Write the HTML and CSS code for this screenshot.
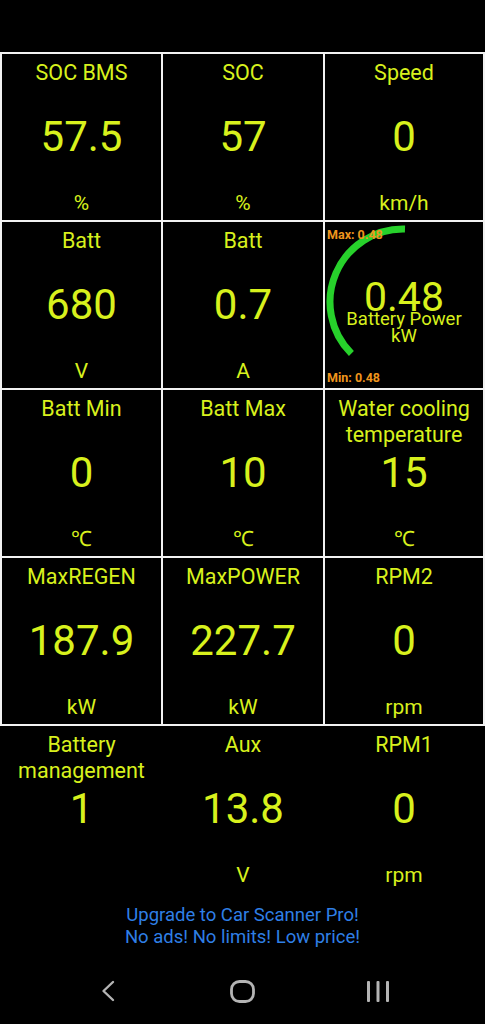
FILE: index.html
```html
<!DOCTYPE html>
<html>
<head>
<meta charset="utf-8">
<link rel="stylesheet" href="styles.css">
</head>
<body>
<div class="screen">
  <div class="status"></div>
  <div class="grid boxed">
    <div class="cell"><div class="title">SOC BMS</div><div class="value">57.5</div><div class="unit">%</div></div>
    <div class="cell"><div class="title">SOC</div><div class="value">57</div><div class="unit">%</div></div>
    <div class="cell"><div class="title">Speed</div><div class="value">0</div><div class="unit">km/h</div></div>

    <div class="cell"><div class="title">Batt</div><div class="value">680</div><div class="unit">V</div></div>
    <div class="cell"><div class="title">Batt</div><div class="value">0.7</div><div class="unit">A</div></div>
    <div class="cell gauge">
      <svg class="arc" width="158" height="166" viewBox="0 0 158 166">
        <path d="M 26.4 131.6 A 73 73 0 0 1 80 7" fill="none" stroke="#27d12b" stroke-width="7"/>
      </svg>
      <div class="gmax">Max: 0.48</div>
      <div class="gvalue">0.48</div>
      <div class="glabel">Battery Power<br>kW</div>
      <div class="gmin">Min: 0.48</div>
    </div>

    <div class="cell"><div class="title">Batt Min</div><div class="value">0</div><div class="unit">℃</div></div>
    <div class="cell"><div class="title">Batt Max</div><div class="value">10</div><div class="unit">℃</div></div>
    <div class="cell"><div class="title">Water cooling temperature</div><div class="value">15</div><div class="unit">℃</div></div>

    <div class="cell"><div class="title">MaxREGEN</div><div class="value">187.9</div><div class="unit">kW</div></div>
    <div class="cell"><div class="title">MaxPOWER</div><div class="value">227.7</div><div class="unit">kW</div></div>
    <div class="cell"><div class="title">RPM2</div><div class="value">0</div><div class="unit">rpm</div></div>
  </div>
  <div class="grid plain">
    <div class="cell"><div class="title">Battery management</div><div class="value">1</div><div class="unit"></div></div>
    <div class="cell"><div class="title">Aux</div><div class="value">13.8</div><div class="unit">V</div></div>
    <div class="cell"><div class="title">RPM1</div><div class="value">0</div><div class="unit">rpm</div></div>
  </div>
  <div class="ad">Upgrade to Car Scanner Pro!<br>No ads! No limits! Low price!</div>
  <div class="nav">
    <div class="navbtn">
      <svg width="16" height="22" viewBox="0 0 16 22"><path d="M13 2 L3.5 11 L13 20" fill="none" stroke="#b4b4b4" stroke-width="2.4" stroke-linecap="round" stroke-linejoin="round"/></svg>
    </div>
    <div class="navbtn">
      <svg width="25" height="23" viewBox="0 0 25 23"><rect x="1.5" y="1.5" width="22" height="20" rx="8" fill="none" stroke="#b4b4b4" stroke-width="2.8"/></svg>
    </div>
    <div class="navbtn">
      <svg width="24" height="23" viewBox="0 0 24 23"><rect x="1" y="1" width="3" height="21" rx="1" fill="#b4b4b4"/><rect x="10.5" y="1" width="3" height="21" rx="1" fill="#b4b4b4"/><rect x="20" y="1" width="3" height="21" rx="1" fill="#b4b4b4"/></svg>
    </div>
  </div>
</div>
</body>
</html>
```

FILE: styles.css
```css
html, body {
  margin: 0;
  padding: 0;
  background: #000;
}
body {
  font-family: Roboto, "Liberation Sans", sans-serif;
  color: #d8f11d;
}
.screen {
  width: 485px;
  height: 1024px;
  display: flex;
  flex-direction: column;
  overflow: hidden;
}
.status {
  height: 52px;
  flex: none;
}
.grid {
  display: grid;
  grid-template-columns: 159px 160px 158px;
  grid-auto-rows: 166px;
  gap: 2px;
  padding: 2px;
  flex: none;
}
.boxed {
  background: #f2f2f2;
}
.plain {
  padding: 0 2px;
}
.cell {
  background: #000;
  display: grid;
  grid-template-rows: 1fr auto 1fr;
  text-align: center;
  position: relative;
  overflow: hidden;
}
.title {
  align-self: start;
  font-size: 21.5px;
  line-height: 26px;
  padding: 6px 4px 0;
}
.value {
  font-size: 42px;
  line-height: 50px;
}
.unit {
  align-self: end;
  font-size: 21px;
  line-height: 26px;
  padding-bottom: 4px;
}
.gauge {
  display: block;
}
.arc {
  position: absolute;
  left: 0;
  top: 0;
}
.gmax, .gmin {
  position: absolute;
  left: 2px;
  font-size: 12.5px;
  font-weight: bold;
  color: #ef951d;
  line-height: 14px;
}
.gmax { top: 6px; }
.gmin { bottom: 3px; }
.gvalue {
  position: absolute;
  left: 0;
  right: 0;
  top: 51px;
  font-size: 41px;
  line-height: 48px;
}
.glabel {
  position: absolute;
  left: 0;
  right: 0;
  top: 89px;
  font-size: 18.5px;
  line-height: 17px;
}
.ad {
  flex: none;
  text-align: center;
  color: #2f7fe6;
  font-size: 18.5px;
  line-height: 22px;
  padding-top: 12px;
  height: 56px;
  box-sizing: border-box;
}
.nav {
  flex: none;
  display: grid;
  grid-template-columns: repeat(3, 135px);
  justify-content: center;
  align-items: center;
  height: 76px;
  padding-top: 10px;
  box-sizing: border-box;
}
.navbtn {
  display: flex;
  justify-content: center;
  align-items: center;
}
.navbtn svg { display: block; }
```
